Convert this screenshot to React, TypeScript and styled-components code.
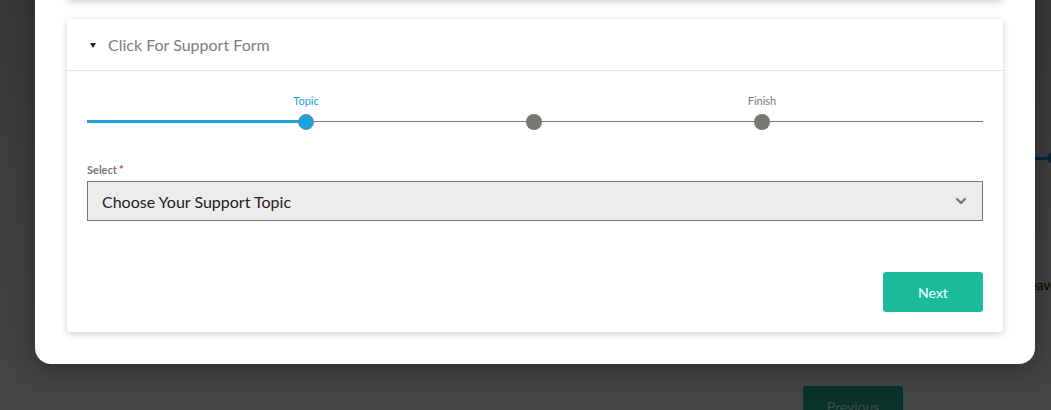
import React from "react";
import styled, { createGlobalStyle } from "styled-components";
import { ChevronDown } from "lucide-react";

const GlobalStyle = createGlobalStyle`
  html, body { margin: 0; padding: 0; }
  body {
    font-family: Lato, "Open Sans", "Liberation Sans", sans-serif;
    background: #fff;
    overflow: hidden;
  }
`;

/* page behind the overlay */
const Page = styled.div`
  position: relative;
  width: 1051px;
  height: 410px;
  overflow: hidden;
  background: #fff;
`;

const PageInner = styled.div`
  display: flex;
  flex-direction: column;
  padding-top: 152px;
`;

const PageProgress = styled.div`
  display: flex;
  align-items: center;
  justify-content: flex-end;
  height: 12px;
  margin-right: -8px;
  &::before {
    content: "";
    width: 180px;
    height: 3px;
    background: #1ca3dd;
  }
  &::after {
    content: "";
    width: 12px;
    height: 12px;
    border-radius: 50%;
    background: #1ca3dd;
  }
`;

const PageText = styled.div`
  margin-top: 113px;
  padding-left: 1024px;
  font-size: 13px;
  line-height: 16px;
  color: #000;
  white-space: nowrap;
`;

const PageActions = styled.div`
  display: flex;
  padding-left: 803px;
  margin-top: 93px;
`;

const PageButton = styled.button`
  width: 100px;
  height: 40px;
  border: none;
  border-radius: 3px;
  background: #1abc9c;
  color: #fff;
  font-family: inherit;
  font-size: 14px;
`;

/* overlay + modal */
const Overlay = styled.div`
  position: absolute;
  inset: 0;
  background: linear-gradient(rgba(0, 0, 0, 0.78), rgba(0, 0, 0, 0.73));
  display: flex;
  align-items: flex-start;
  padding-left: 35px;
`;

const Modal = styled.div`
  width: 1000px;
  margin-top: -22px;
  padding: 0 32px 32px;
  box-sizing: border-box;
  background: #fff;
  border-radius: 0 0 16px 16px;
  box-shadow: 0 4px 24px rgba(0, 0, 0, 0.35);
  display: flex;
  flex-direction: column;
  gap: 19px;
`;

const Card = styled.div`
  background: #fff;
  border-radius: 4px;
  box-shadow: 0 2px 7px rgba(0, 0, 0, 0.2);
`;

const PrevCard = styled(Card)`
  height: 22px;
  border-radius: 0 0 4px 4px;
`;

const CardHeader = styled.div`
  display: flex;
  align-items: center;
  gap: 12px;
  height: 51px;
  padding: 0 22px 0 23px;
  border-bottom: 1px solid #e1e1e1;
  font-size: 16px;
  color: #7d7d7d;
`;

const Caret = styled.span`
  width: 0;
  height: 0;
  border-left: 3px solid transparent;
  border-right: 3px solid transparent;
  border-top: 5px solid #222;
  margin-top: 1px;
`;

const CardBody = styled.div`
  display: flex;
  flex-direction: column;
  padding: 23px 20px 20px;
`;

const Stepper = styled.div`
  display: flex;
  flex-direction: column;
  gap: 6px;
`;

const LabelRow = styled.div`
  position: relative;
  height: 14px;
`;

const StepLabel = styled.span<{ $left: number; $active?: boolean }>`
  position: absolute;
  left: ${({ $left }) => $left}px;
  transform: translateX(-50%);
  font-size: 11px;
  line-height: 14px;
  color: ${({ $active }) => ($active ? "#1ca3dd" : "#7a7a7a")};
`;

const Track = styled.div`
  position: relative;
  height: 16px;
  &::before {
    content: "";
    position: absolute;
    left: 0;
    right: 0;
    top: 7px;
    height: 1px;
    background: #777;
  }
`;

const Fill = styled.div<{ $width: number }>`
  position: absolute;
  left: 0;
  top: 6px;
  height: 3px;
  width: ${({ $width }) => $width}px;
  background: #1ca3dd;
`;

const Dot = styled.span<{ $left: number; $active?: boolean }>`
  position: absolute;
  top: 0;
  left: ${({ $left }) => $left - 8}px;
  width: 16px;
  height: 16px;
  box-sizing: border-box;
  border-radius: 50%;
  background: ${({ $active }) => ($active ? "#1ca3dd" : "#777770")};
  border: ${({ $active }) => ($active ? "1px solid #6f8a96" : "none")};
`;

const Field = styled.div`
  display: flex;
  flex-direction: column;
  gap: 4px;
  margin-top: 33px;
`;

const FieldLabel = styled.label`
  font-size: 11px;
  line-height: 14px;
  font-weight: 700;
  color: #777;
  span { color: #e2403f; margin-left: 2px; }
`;

const SelectBox = styled.div`
  display: flex;
  align-items: center;
  justify-content: space-between;
  height: 40px;
  box-sizing: border-box;
  padding: 0 13px 0 14px;
  background: #ececec;
  border: 1px solid #777;
  font-size: 16px;
  color: #222;
  svg { color: #777; }
`;

const Actions = styled.div`
  display: flex;
  justify-content: flex-end;
  margin-top: 51px;
`;

const NextButton = styled.button`
  width: 100px;
  height: 40px;
  border: none;
  border-radius: 3px;
  background: #1abc9c;
  color: #fff;
  font-family: inherit;
  font-size: 14px;
  cursor: pointer;
`;

const steps = [
  { label: "Topic", at: 219, active: true },
  { label: "", at: 447 },
  { label: "Finish", at: 675 },
];

export default function App() {
  return (
    <>
      <GlobalStyle />
      <Page>
        <PageInner>
          <PageProgress />
          <PageText>Leave</PageText>
          <PageActions>
            <PageButton>Previous</PageButton>
          </PageActions>
        </PageInner>
        <Overlay>
          <Modal>
            <PrevCard />
            <Card>
              <CardHeader>
                <Caret />
                Click For Support Form
              </CardHeader>
              <CardBody>
                <Stepper>
                  <LabelRow>
                    {steps.map((s, i) =>
                      s.label ? (
                        <StepLabel key={i} $left={s.at} $active={s.active}>
                          {s.label}
                        </StepLabel>
                      ) : null
                    )}
                  </LabelRow>
                  <Track>
                    <Fill $width={219} />
                    {steps.map((s, i) => (
                      <Dot key={i} $left={s.at} $active={s.active} />
                    ))}
                  </Track>
                </Stepper>
                <Field>
                  <FieldLabel>
                    Select<span>*</span>
                  </FieldLabel>
                  <SelectBox>
                    Choose Your Support Topic
                    <ChevronDown size={16} strokeWidth={3.5} />
                  </SelectBox>
                </Field>
                <Actions>
                  <NextButton>Next</NextButton>
                </Actions>
              </CardBody>
            </Card>
          </Modal>
        </Overlay>
      </Page>
    </>
  );
}
